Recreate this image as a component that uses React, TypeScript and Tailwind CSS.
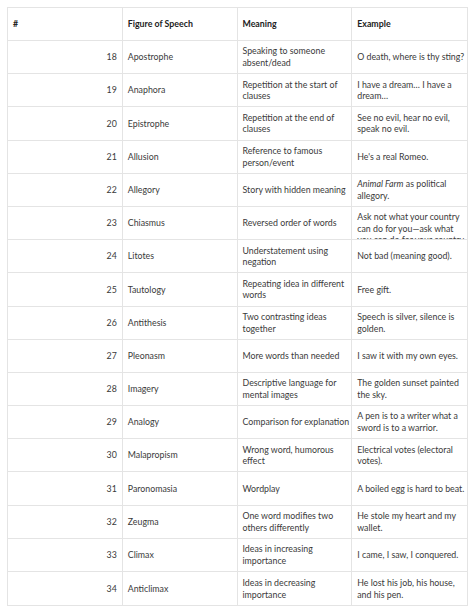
import React from 'react';

type Row = [number, string, string, React.ReactNode];

const rows: Row[] = [
  [18, 'Apostrophe', 'Speaking to someone absent/dead', 'O death, where is thy sting?'],
  [19, 'Anaphora', 'Repetition at the start of clauses', 'I have a dream… I have a dream…'],
  [20, 'Epistrophe', 'Repetition at the end of clauses', 'See no evil, hear no evil, speak no evil.'],
  [21, 'Allusion', 'Reference to famous person/event', "He's a real Romeo."],
  [22, 'Allegory', 'Story with hidden meaning', <><i>Animal Farm</i> as political allegory.</>],
  [23, 'Chiasmus', 'Reversed order of words', 'Ask not what your country can do for you—ask what you can do for your country.'],
  [24, 'Litotes', 'Understatement using negation', 'Not bad (meaning good).'],
  [25, 'Tautology', 'Repeating idea in different words', 'Free gift.'],
  [26, 'Antithesis', 'Two contrasting ideas together', 'Speech is silver, silence is golden.'],
  [27, 'Pleonasm', 'More words than needed', 'I saw it with my own eyes.'],
  [28, 'Imagery', 'Descriptive language for mental images', 'The golden sunset painted the sky.'],
  [29, 'Analogy', 'Comparison for explanation', 'A pen is to a writer what a sword is to a warrior.'],
  [30, 'Malapropism', 'Wrong word, humorous effect', 'Electrical votes (electoral votes).'],
  [31, 'Paronomasia', 'Wordplay', 'A boiled egg is hard to beat.'],
  [32, 'Zeugma', 'One word modifies two others differently', 'He stole my heart and my wallet.'],
  [33, 'Climax', 'Ideas in increasing importance', 'I came, I saw, I conquered.'],
  [34, 'Anticlimax', 'Ideas in decreasing importance', 'He lost his job, his house, and his pen.'],
];

const cell =
  'flex [align-items:safe_center] overflow-hidden pl-[5px] pr-0 py-[4px] border-r border-[#e4e4e4] last:border-r-0';

export default function App() {
  return (
    <div
      className="min-h-[613px] bg-white pt-[7px] pl-[7px] text-[8.8px] leading-[11.7px] text-[#3a3a3a]"
      style={{ fontFamily: 'Lato, Arial, sans-serif' }}
    >
      <div className="w-[461px] border border-[#e4e4e4]">
        <div className="grid grid-cols-4 h-[33px] border-b border-[#e4e4e4] font-bold text-[#222]">
          <div className={cell}>#</div>
          <div className={cell}>Figure of Speech</div>
          <div className={cell}>Meaning</div>
          <div className={cell}>Example</div>
        </div>
        {rows.map(([n, fig, meaning, example]) => (
          <div
            key={n}
            className="grid grid-cols-4 h-[33.2px] border-b border-[#e4e4e4] last:border-b-0"
          >
            <div className={cell + ' justify-end pr-[5px]'}>{n}</div>
            <div className={cell}>{fig}</div>
            <div className={cell}>
              <span>{meaning}</span>
            </div>
            <div className={cell}>
              <span>{example}</span>
            </div>
          </div>
        ))}
      </div>
    </div>
  );
}
